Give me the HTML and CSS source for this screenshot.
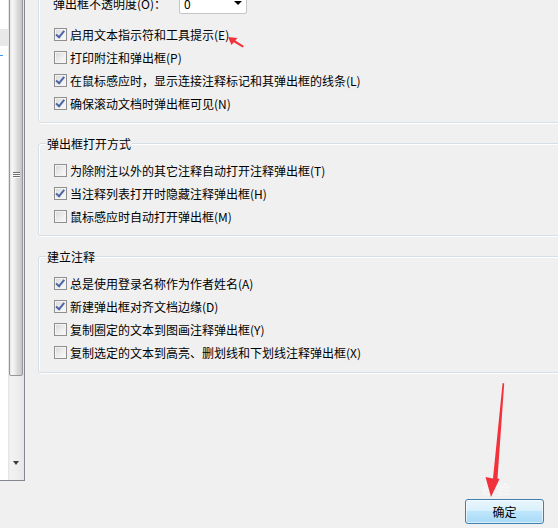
FILE: index.html
```html
<!DOCTYPE html>
<html lang="zh-CN">
<head>
<meta charset="utf-8">
<title>注释首选项</title>
<link rel="stylesheet" href="styles.css">
</head>
<body>
<div class="page">
  <div class="window">
    <div class="sidebar">
      <div class="list">
        <div class="list-sel"></div>
        <div class="list-mark"></div>
      </div>
      <div class="vscroll">
        <div class="thumb"><span class="grip"></span><span class="grip"></span><span class="grip"></span></div>
        <div class="track"></div>
        <div class="down"><span class="tri"></span></div>
      </div>
    </div>
    <div class="content">
      <div class="group g1">
        <div class="opacity-row">
          <span class="label">弹出框不透明度(O)：</span>
          <span class="combo"><span class="combo-val">0</span><span class="combo-arrow"></span></span>
        </div>
        <div class="rows">
          <label class="row"><span class="cb checked"></span>启用文本指示符和工具提示(E)</label>
          <label class="row"><span class="cb"></span>打印附注和弹出框(P)</label>
          <label class="row"><span class="cb checked"></span>在鼠标感应时，显示连接注释标记和其弹出框的线条(L)</label>
          <label class="row"><span class="cb checked"></span>确保滚动文档时弹出框可见(N)</label>
        </div>
      </div>
      <div class="group g2">
        <div class="legend">弹出框打开方式</div>
        <div class="rows">
          <label class="row"><span class="cb"></span>为除附注以外的其它注释自动打开注释弹出框(T)</label>
          <label class="row"><span class="cb checked"></span>当注释列表打开时隐藏注释弹出框(H)</label>
          <label class="row"><span class="cb"></span>鼠标感应时自动打开弹出框(M)</label>
        </div>
      </div>
      <div class="group g3">
        <div class="legend">建立注释</div>
        <div class="rows">
          <label class="row"><span class="cb checked"></span>总是使用登录名称作为作者姓名(A)</label>
          <label class="row"><span class="cb checked"></span>新建弹出框对齐文档边缘(D)</label>
          <label class="row"><span class="cb"></span>复制圈定的文本到图画注释弹出框(Y)</label>
          <label class="row"><span class="cb"></span>复制选定的文本到高亮、删划线和下划线注释弹出框(X)</label>
        </div>
      </div>
    </div>
  </div>
  <div class="footer">
    <button class="ok">确定</button>
  </div>
  <div class="watermark"><span class="wm1">经验</span></div>
  <svg class="annot" width="558" height="528" viewBox="0 0 558 528" xmlns="http://www.w3.org/2000/svg">
    <polygon points="228,37 237.5,38 235.3,40.6 244,46 242.6,47.6 233.8,42.2 231.5,45" fill="#f0323c"/>
    <polygon points="502.6,383 504.2,383.5 497.5,478.5 499.5,479 491,497 485.5,477 493,478.5" fill="#f2313a"/>
  </svg>
</div>
</body>
</html>
```
FILE: styles.css
```css
html, body {
  margin: 0;
  padding: 0;
}
body {
  background: #f0f0f0;
  font-family: "Noto Sans CJK SC", "Liberation Sans", sans-serif;
  font-size: 12px;
  color: #000;
}
.page {
  position: relative;
  width: 558px;
  height: 528px;
  overflow: hidden;
  background: #f0f0f0;
}
.window {
  display: flex;
  height: 481px;
}
.sidebar {
  display: flex;
  width: 24px;
  height: 480px;
  border-right: 1px solid #828790;
  border-bottom: 1px solid #828790;
  flex: none;
}
.list {
  width: 8px;
  background: #fff;
  display: flex;
  flex-direction: column;
}
.list-sel {
  margin-top: 29px;
  height: 17px;
  background: #e8e8e8;
}
.list-mark {
  margin-top: 9px;
  width: 3px;
  height: 1px;
  background: #3399ff;
}
.vscroll {
  width: 16px;
  display: flex;
  flex-direction: column;
  background: linear-gradient(to right, #e3e3e3 0%, #f2f2f2 15%, #eeeeee 60%, #e6e6e6 100%);
}
.thumb {
  margin: -10px 1px 0 1px;
  border: 1px solid #979797;
  border-radius: 0 0 2px 2px;
  background: linear-gradient(to right, #e4e4e4 0%, #f7f7f7 18%, #ececec 40%, #dcdcdc 60%, #cfcfcf 85%, #c2c2c2 100%);
  display: flex;
  flex-direction: column;
  align-items: center;
  padding-top: 181px;
  box-sizing: border-box;
  height: 386px;
}
.grip {
  display: block;
  width: 7px;
  height: 1px;
  background: #6e6e6e;
  border-bottom: 1px solid #fafafa;
}
.track {
  flex: 1;
}
.down {
  height: 24px;
  display: flex;
  justify-content: center;
  padding-top: 5px;
  box-sizing: border-box;
}
.tri {
  width: 0;
  height: 0;
  border-left: 3.5px solid transparent;
  border-right: 3.5px solid transparent;
  border-top: 4px solid #3c3c3c;
}
.content {
  margin-left: 13px;
  width: 540px;
  flex: none;
}
.group {
  border: 1px solid #d5dfe5;
  border-radius: 3px;
  box-shadow: inset 1px 1px 0 #fff, 1px 1px 0 #fff;
  width: 540px;
  box-sizing: border-box;
}
.g1 {
  margin-top: -20px;
  padding-top: 11px;
  padding-bottom: 7px;
}
.g2 {
  margin-top: 20px;
  padding-bottom: 7px;
}
.g3 {
  margin-top: 20px;
  padding-bottom: 8px;
}
.legend {
  margin-top: -9px;
  margin-left: 7px;
  width: fit-content;
  padding: 0 1px;
  background: #f0f0f0;
  line-height: 18px;
  height: 18px;
}
.g2 .rows, .g3 .rows {
  margin-top: 6px;
}
.opacity-row {
  display: flex;
  align-items: center;
  height: 22px;
  padding-left: 14px;
}
.label {
  width: 126px;
  line-height: 17px;
}
.combo {
  display: flex;
  align-items: center;
  justify-content: space-between;
  box-sizing: border-box;
  width: 68px;
  height: 21px;
  background: #fff;
  border: 1px solid #c5c5c5;
  border-radius: 0 0 2px 2px;
  padding: 0 4px 0 4px;
}
.combo-arrow {
  width: 0;
  height: 0;
  border-left: 4px solid transparent;
  border-right: 4px solid transparent;
  border-top: 4px solid #000;
}
.g1 .rows {
  margin-top: 9px;
}
.row {
  display: flex;
  align-items: center;
  height: 23px;
  padding-left: 15px;
  white-space: nowrap;
  line-height: 17px;
}
.cb {
  flex: none;
  position: relative;
  width: 13px;
  height: 13px;
  box-sizing: border-box;
  border: 1px solid #8f8f8f;
  background: linear-gradient(135deg, #d6d6d6 0%, #ececec 50%, #fbfbfb 100%);
  box-shadow: inset 0 0 0 1px #f4f4f4;
  margin-right: 3px;
}
.cb.checked::after {
  content: "";
  position: absolute;
  left: 2px;
  top: 0px;
  width: 3px;
  height: 7px;
  border-right: 2px solid #4a64a4;
  border-bottom: 2px solid #4a64a4;
  transform: rotate(40deg);
  transform-origin: 60% 60%;
}
.footer {
  display: flex;
  justify-content: flex-end;
  padding-top: 18px;
  padding-right: 14px;
}
.ok {
  width: 79px;
  height: 25px;
  border: 1px solid #3c7fb1;
  border-radius: 3px;
  background: linear-gradient(to bottom, #eaf6fd 0%, #d9f0fc 45%, #bee6fd 50%, #a7d9f5 100%);
  box-shadow: inset 0 0 0 1px rgba(255,255,255,0.6);
  font-family: "Noto Sans CJK SC", "Liberation Sans", sans-serif;
  font-size: 12px;
  color: #000;
  padding: 0;
  line-height: 17px;
}
.watermark {
  position: absolute;
  left: 482px;
  top: 480px;
  color: rgba(255,255,255,0.55);
  pointer-events: none;
}
.wm1 {
  font-size: 14px;
  line-height: 16px;
}
.annot {
  position: absolute;
  left: 0;
  top: 0;
  pointer-events: none;
}
```
